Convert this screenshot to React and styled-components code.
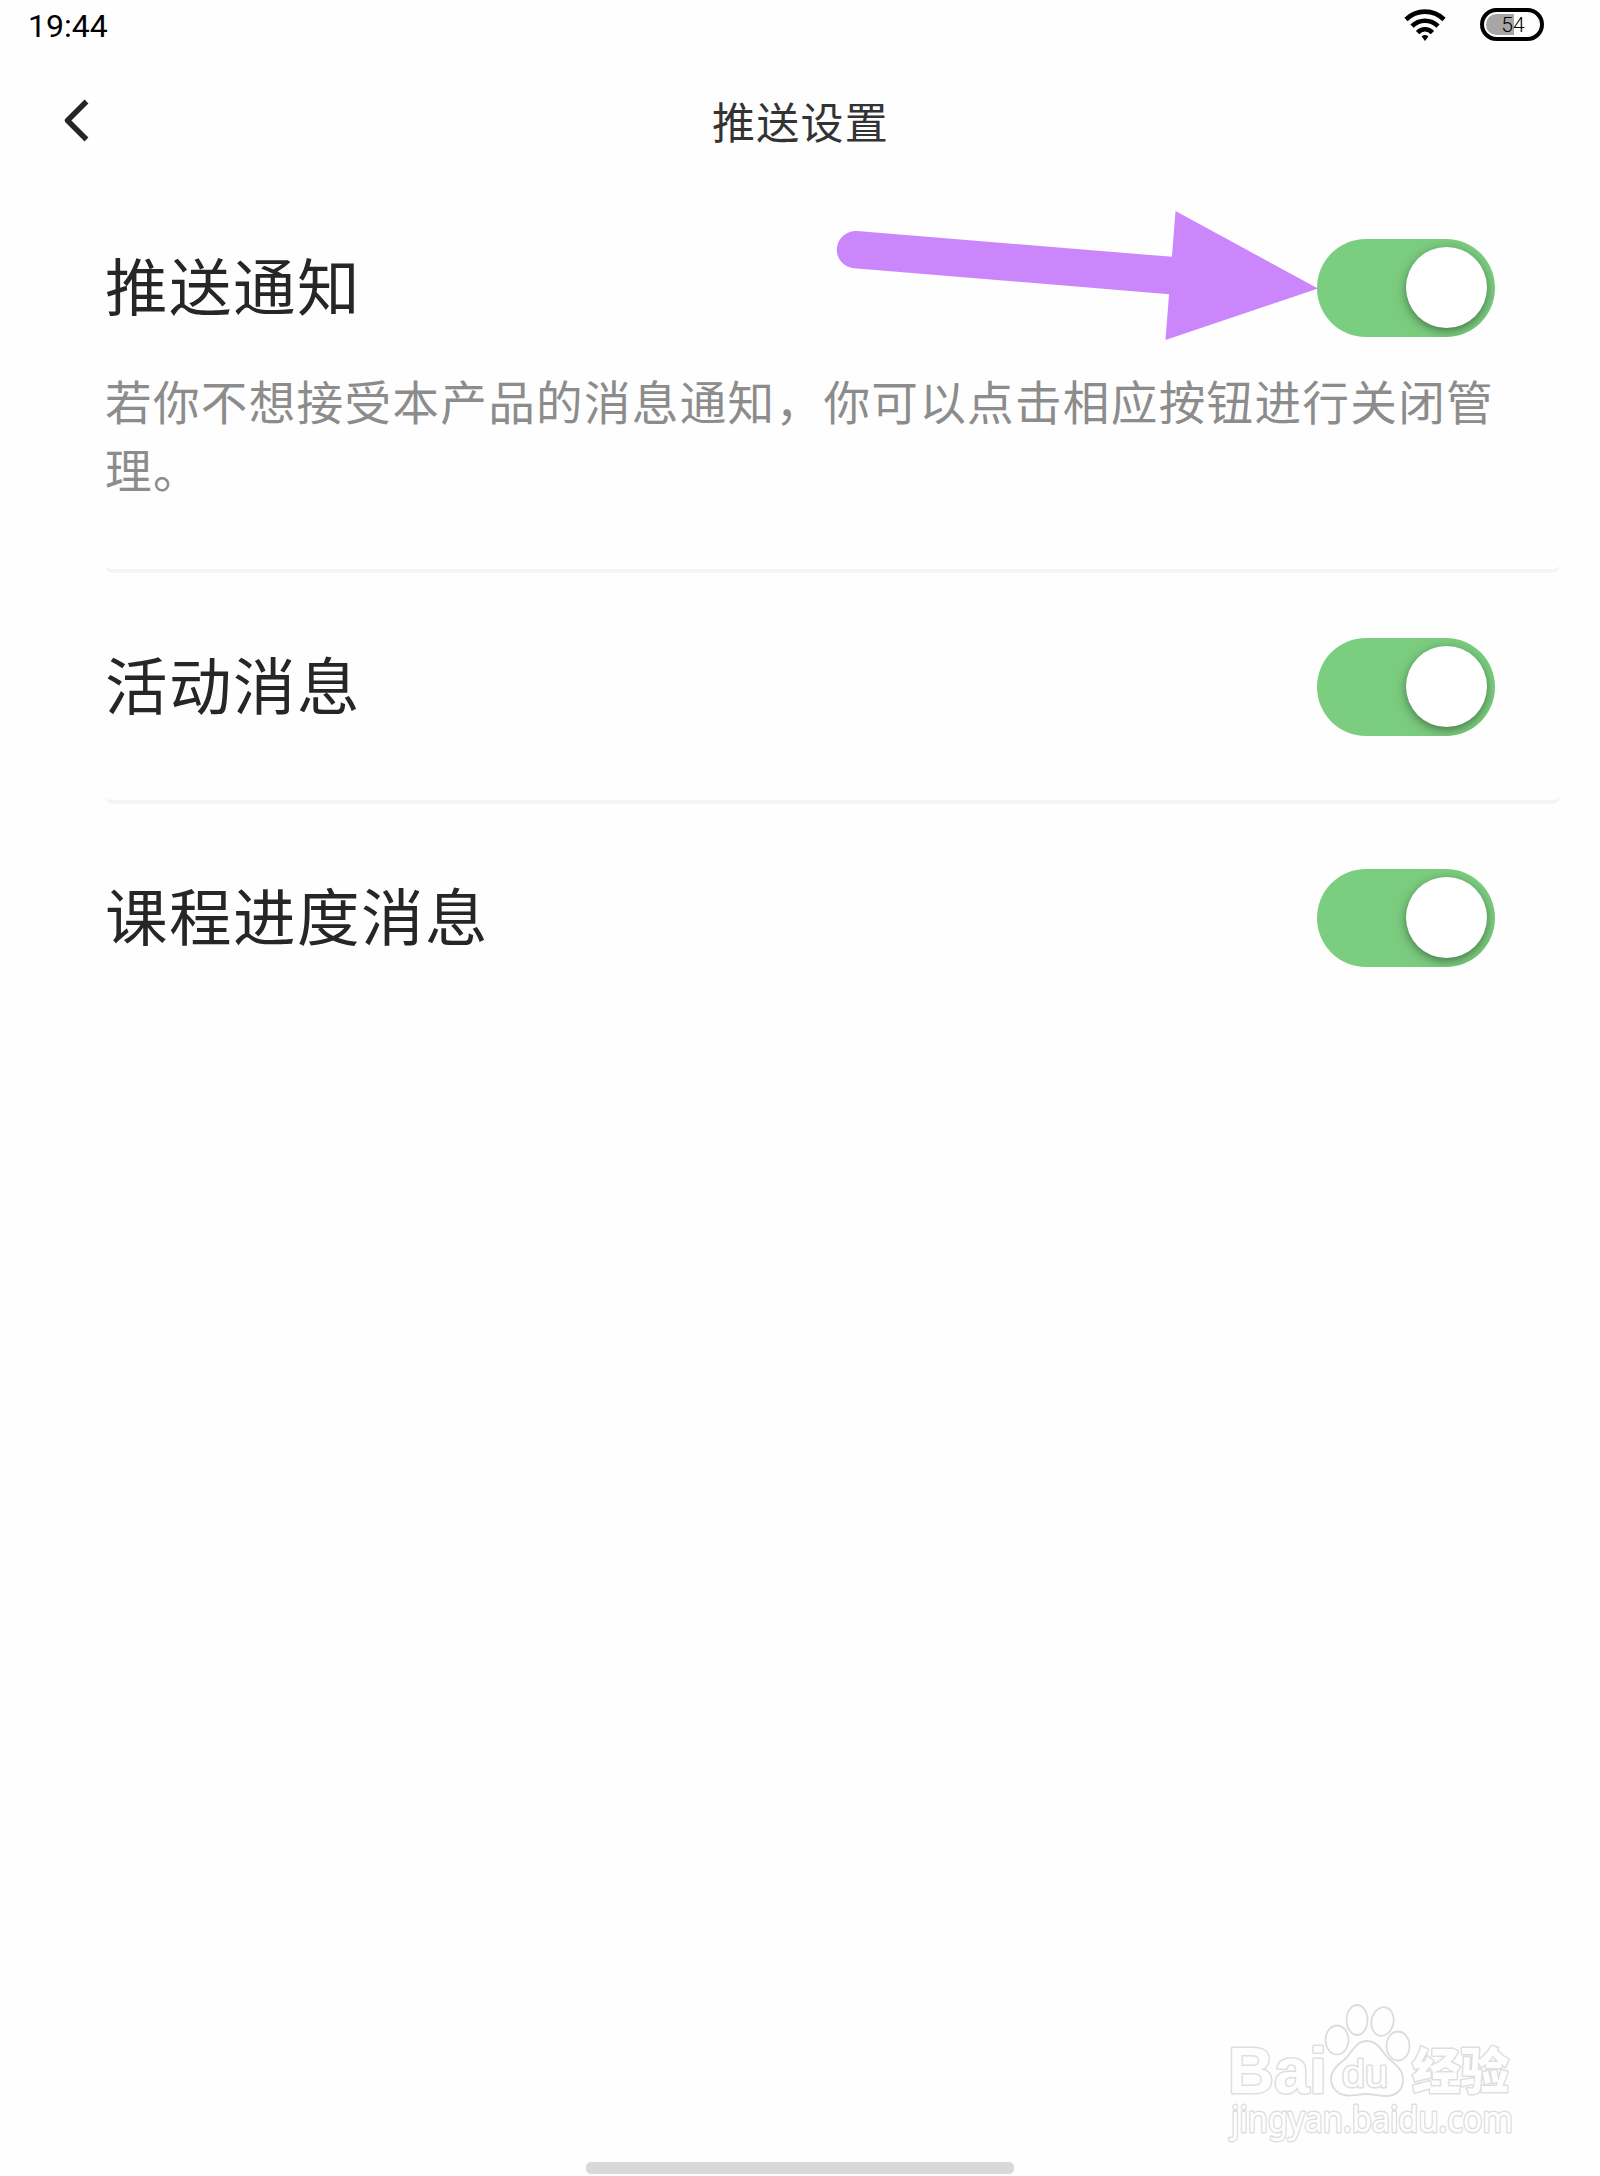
import React from "react";
import styled, { createGlobalStyle } from "styled-components";

const GlobalStyle = createGlobalStyle`
  body {
    margin: 0;
    background: #fefefe;
    font-family: "Noto Sans CJK SC", sans-serif;
  }
`;

const Screen = styled.div`
  position: relative;
  display: flex;
  flex-direction: column;
  width: 1600px;
  height: 2176px;
  overflow: hidden;
  background: #fefefe;
`;

const StatusBar = styled.header`
  display: flex;
  align-items: center;
  justify-content: space-between;
  height: 49px;
  padding: 0 56px 0 28px;
  box-sizing: border-box;
`;

const Clock = styled.span`
  font: 400 32px/48px Roboto, sans-serif;
  color: #000;
  padding-top: 3px;
`;

const StatusIcons = styled.div`
  display: flex;
  align-items: center;
  gap: 34px;
`;

const Wifi = styled.svg`
  display: block;
  width: 42px;
  height: 34px;
`;

const Battery = styled.div`
  display: flex;
  align-items: center;
  justify-content: center;
  width: 64px;
  height: 33px;
  box-sizing: border-box;
  border: 4px solid #000;
  border-radius: 17px;
`;

const BatteryBody = styled.div`
  width: 52px;
  height: 21px;
  box-sizing: border-box;
  padding-left: 2px;
  border-radius: 10.5px;
  background: linear-gradient(90deg, #a6a6a6 ${(p) => p.$level}%, transparent ${(p) => p.$level}%);
  font: 350 21px/23px Roboto, sans-serif;
  text-align: center;
  color: #000;
`;

const TitleBar = styled.div`
  display: grid;
  grid-template-columns: 1fr auto 1fr;
  align-items: center;
  height: 144px;
  padding: 0 58px 0 59px;
`;

const BackButton = styled.button`
  display: block;
  width: 34px;
  height: 50px;
  padding: 0;
  border: 0;
  background: none;
`;

const BackIcon = styled.svg`
  display: block;
  width: 34px;
  height: 50px;
`;

const Title = styled.h1`
  margin: 0;
  padding-bottom: 2px;
  font-size: 43px;
  letter-spacing: 1.2px;
  line-height: 64px;
  font-weight: 400;
  color: #333;
`;

const List = styled.main`
  display: flex;
  flex-direction: column;
  padding: 0 40px 0 105px;
`;

const Item = styled.section`
  display: flex;
  flex-direction: column;
  box-sizing: border-box;
  height: ${(p) => p.$height}px;
  padding-right: 65px;
  border-bottom: ${(p) => (p.$last ? "none" : "4px solid #f4f4f4")};
  border-radius: 0 0 8px 8px;
`;

const Row = styled.div`
  display: flex;
  align-items: center;
  justify-content: space-between;
  height: ${(p) => p.$height}px;
`;

const Label = styled.span`
  padding-bottom: 7px;
  font-size: 62.5px;
  letter-spacing: 1.5px;
  line-height: 90px;
  color: #262626;
`;

const Hint = styled.p`
  margin: -16px -10px 0 0;
  font-size: 46.6px;
  letter-spacing: 1.3px;
  line-height: 68px;
  color: #8c8c8c;
`;

const Switch = styled.button`
  display: flex;
  flex: none;
  justify-content: flex-end;
  align-items: center;
  width: 178px;
  height: 98px;
  padding: 0 8px;
  border: 0;
  border-radius: 49px;
  overflow: hidden;
  background: #7bcd7f;
`;

const Knob = styled.span`
  width: 81px;
  height: 81px;
  border-radius: 50%;
  background: #fff;
  box-shadow: 0 3px 8px rgba(0, 0, 0, 0.38), 0 5px 30px rgba(0, 0, 0, 0.06);
`;

const Arrow = styled.svg`
  position: absolute;
  left: 830px;
  top: 205px;
  width: 490px;
  height: 140px;
`;

const Watermark = styled.svg`
  position: absolute;
  left: 1210px;
  top: 1985px;
  width: 330px;
  height: 175px;
  overflow: visible;
  text {
    fill: #fefefe;
    stroke: #dedede;
    stroke-width: 3px;
    stroke-linejoin: round;
    paint-order: stroke;
  }
`;

const HomeIndicator = styled.div`
  width: 428px;
  height: 12px;
  margin: auto auto 2px;
  border-radius: 5px;
  background: #d9d9d9;
`;

function Toggle({ label }) {
  return (
    <Switch role="switch" aria-checked="true" aria-label={label}>
      <Knob />
    </Switch>
  );
}

export default function App() {
  return (
    <Screen>
      <GlobalStyle />
      <StatusBar>
        <Clock>19:44</Clock>
        <StatusIcons>
          <Wifi viewBox="0 0 42 34" fill="none" stroke="#000" strokeWidth="4.6">
            <path d="M2 11.5C12.5 1 29.500 1 40 11.500" />
            <path d="M8 18.200C15 11 27 11 34 18.200" />
            <path d="M13.600 24.600C17.600 20.200 24.400 20.200 28.400 24.600" />
            <path d="M17.600 28.400C19.600 26.600 22.400 26.600 24.400 28.400L21 33Z" fill="#000" stroke="none" />
          </Wifi>
          <Battery>
            <BatteryBody $level={54}>54</BatteryBody>
          </Battery>
        </StatusIcons>
      </StatusBar>

      <TitleBar>
        <BackButton aria-label="返回">
          <BackIcon viewBox="0 0 34 50" fill="none" stroke="#262626" strokeWidth="5.400" strokeLinejoin="round">
            <path d="M27.500 5.500L8.500 24.500L27.500 43.500" />
          </BackIcon>
        </BackButton>
        <Title>推送设置</Title>
        <span />
      </TitleBar>

      <List>
        <Item $height={380}>
          <Row $height={189}>
            <Label>推送通知</Label>
            <Toggle label="推送通知" />
          </Row>
          <Hint>若你不想接受本产品的消息通知，你可以点击相应按钮进行关闭管理。</Hint>
        </Item>
        <Item $height={231}>
          <Row $height={227}>
            <Label>活动消息</Label>
            <Toggle label="活动消息" />
          </Row>
        </Item>
        <Item $height={231} $last>
          <Row $height={227}>
            <Label>课程进度消息</Label>
            <Toggle label="课程进度消息" />
          </Row>
        </Item>
      </List>

      <HomeIndicator />

      <Arrow viewBox="830 205 490 140">
        <path d="M855.500 249.700L1171 275.500" stroke="#cb86fb" strokeWidth="37.400" strokeLinecap="round" />
        <path d="M1175.500 211L1318 288.500L1165.500 340Z" fill="#cb86fb" />
      </Arrow>

      <Watermark viewBox="1210 1985 330 175">
        <text x="1228" y="2093" fontFamily="Liberation Sans" fontWeight="700" fontSize="65" textLength="99" lengthAdjust="spacingAndGlyphs">Bai</text>
        <g fill="#fefefe" stroke="#dcdcdc" strokeWidth="1.800">
          <ellipse cx="1337" cy="2040" rx="11.500" ry="14.500" />
          <ellipse cx="1357" cy="2020" rx="10.500" ry="15" />
          <ellipse cx="1382.500" cy="2021.500" rx="11" ry="14.500" transform="rotate(12 1382.500 2021.500)" />
          <ellipse cx="1398" cy="2046" rx="11.500" ry="14.500" />
          <path d="M1367 2041C1378 2041 1382 2052 1389 2059C1396 2065 1403 2069 1403 2080C1403 2090 1396 2096 1386 2096C1379 2096 1374 2094 1366 2094C1359 2094 1354 2096 1347 2095.500C1338 2095 1331 2088 1331 2079C1331 2069 1340 2064 1347 2057C1354 2049 1357 2041 1367 2041Z" />
        </g>
        <text x="1342" y="2086.500" fontFamily="Liberation Sans" fontSize="39" textLength="46" lengthAdjust="spacingAndGlyphs">du</text>
        <text x="1412" y="2089" fontFamily="Noto Sans CJK SC" fontWeight="900" fontSize="49" textLength="97" lengthAdjust="spacingAndGlyphs">经验</text>
        <text x="1231" y="2131.500" fontFamily="Noto Sans" fontSize="36" textLength="282" lengthAdjust="spacingAndGlyphs">jingyan.baidu.com</text>
      </Watermark>
    </Screen>
  );
}
